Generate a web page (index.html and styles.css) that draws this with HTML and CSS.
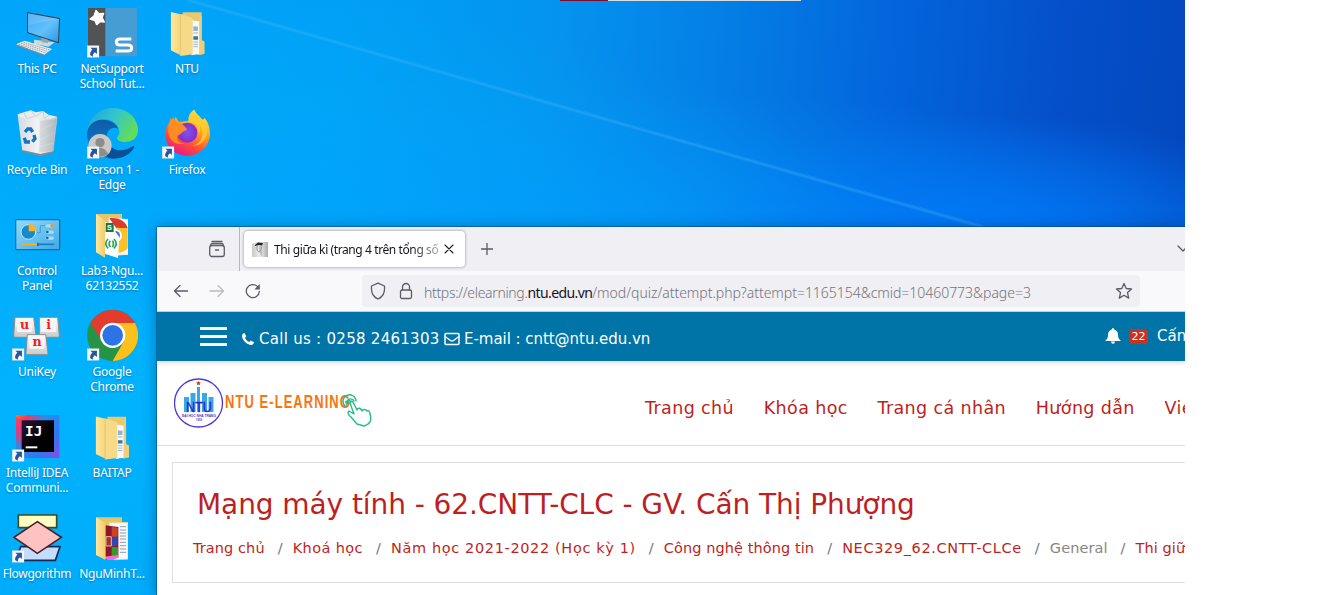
FILE: index.html
```
<!DOCTYPE html>
<html lang="vi">
<head>
<meta charset="utf-8">
<title>Desktop</title>
<link rel="stylesheet" href="styles.css">
</head>
<body>
<svg class="defs" aria-hidden="true">
  <defs>
    <linearGradient id="screen" x1="0" y1="0" x2="1" y2="1"><stop offset="0" stop-color="#3fa9f5"/><stop offset=".55" stop-color="#62c1fb"/><stop offset="1" stop-color="#2b97e8"/></linearGradient>
    <linearGradient id="fold" x1="0" y1="0" x2="1" y2="0"><stop offset="0" stop-color="#ffe7a2"/><stop offset="1" stop-color="#f0cb68"/></linearGradient>
    <linearGradient id="edgeTop" x1="0" y1="0" x2="1" y2=".5"><stop offset="0" stop-color="#1c9fdc"/><stop offset=".5" stop-color="#2fc5cf"/><stop offset="1" stop-color="#62dc5c"/></linearGradient>
    <linearGradient id="edgeBody" x1="0" y1="0" x2="0" y2="1"><stop offset="0" stop-color="#0c5ba8"/><stop offset="1" stop-color="#1583d3"/></linearGradient>
    <linearGradient id="fox" x1=".8" y1="0" x2=".3" y2="1"><stop offset="0" stop-color="#fff04a"/><stop offset=".4" stop-color="#ffa51e"/><stop offset=".72" stop-color="#ff4a3c"/><stop offset="1" stop-color="#e8148a"/></linearGradient>
    <radialGradient id="globe"><stop offset="0" stop-color="#7a55f0"/><stop offset="1" stop-color="#8a2bc8"/></radialGradient>
    <linearGradient id="key" x1="0" y1="0" x2="0" y2="1"><stop offset="0" stop-color="#fff"/><stop offset="1" stop-color="#c9c9c9"/></linearGradient>
    <linearGradient id="ij" x1="0" y1="0" x2="1" y2=".9"><stop offset="0" stop-color="#ff7a2c"/><stop offset=".16" stop-color="#f7355e"/><stop offset=".4" stop-color="#268df0"/><stop offset=".75" stop-color="#3574ee"/><stop offset="1" stop-color="#7a54e8"/></linearGradient>
    <linearGradient id="ijIn" x1="0" y1="0" x2="1" y2="1"><stop offset="0" stop-color="#2b1336"/><stop offset=".6" stop-color="#000"/></linearGradient>
    <linearGradient id="panel" x1="0" y1="0" x2="1" y2="1"><stop offset="0" stop-color="#8fdcff"/><stop offset="1" stop-color="#3fa9e6"/></linearGradient>
    <linearGradient id="bin" x1="0" y1="0" x2="1" y2="0"><stop offset="0" stop-color="#d5dbe0"/><stop offset=".5" stop-color="#f1f3f4"/><stop offset="1" stop-color="#b3bcc2"/></linearGradient>
    <symbol id="shortcut" viewBox="0 0 36 36">
      <rect x=".5" y=".5" width="35" height="35" fill="#f4f6f8" stroke="#c8d0d8"/>
      <path d="M10 7h19v18l-6-5c-5 4-6 7-6 13l-8-5c0-8 3-12 7-15z" fill="#27569f"/>
    </symbol>
    <symbol id="folder" viewBox="0 0 102 134">
      <path d="M36 3h57v84l8 4v36l-18 4-47-30z" fill="#e8c870"/>
      <path d="M62 27l24 3v98l-24 4z" fill="#f7f8fa"/>
      <path d="M68 45l14 1v12l-14 1z" fill="#8ab3d8"/><path d="M68 75h14v10H68z" fill="#39799e"/>
      <path d="M68 65h14M68 92h14M68 99h14M68 106h14" stroke="#a3b3c2" stroke-width="3"/>
      <path d="M86 14h7v73l9 4v36l-16 4z" fill="#edcf7b"/>
      <path d="M0 2l45 10v120l-18-2L0 117z" fill="url(#fold)"/>
      <path d="M29 8l37 12v109l-37 5z" fill="#f6da88"/><path d="M29 8v126" stroke="#dfbf66" stroke-width="2"/>
    </symbol>
  </defs>
</svg>

<main class="desktop">
  <svg class="ray" viewBox="0 0 1185 227" aria-hidden="true">
    <path d="M188 0L983 227" stroke="#41b5ff" stroke-opacity=".22" stroke-width="4"/>
    <path d="M188 0L983 227" stroke="#6cc4ff" stroke-opacity=".18"/>
  </svg>
  <div class="strip"><span class="strip-mark"></span></div>

  <div class="icons">
    <div class="icon">
      <svg viewBox="0 12 225 171">
        <path d="M102 119l62 8-18 13-44-8z" fill="#d4d8da"/><path d="M124 112l22 3-2 14-18-2z" fill="#9aa5ad"/>
        <path d="M81 36l99 18-3 76-96-31z" fill="#33424f"/><path d="M84 40l93 17-3 69-90-29z" fill="url(#screen)"/>
        <path d="M84 76l93-19V57L84 40z" fill="#fff" opacity=".12"/>
        <path d="M48 133l26-11 82 25-23 17z" fill="#eceeee"/><path d="M48 133l85 31v3l-85-30z" fill="#7f8a92"/>
        <path d="M56 133l82 26M63 130l82 25M70 127l80 23" stroke="#8d979e" stroke-width="2.5" stroke-dasharray="5 2"/>
      </svg>
      <span class="label">This PC</span>
    </div>
    <div class="icon">
      <svg viewBox="225 12 225 171">
        <path d="M264 24h147v145H264z" fill="#459dd3"/><path d="M264 24h52v144h-52z" fill="#525355"/>
        <path d="M288 31l9 10 14-1-5 13 7 13-13-1-10 9-5-12-15-5 12-9z" fill="#fff" stroke="#fff" stroke-width="4" stroke-linejoin="round"/>
        <path d="M394 117h-34q-11 0-11 9t11 9h24q11 0 11 9t-11 9h-37" fill="none" stroke="#fff" stroke-width="9"/>
        <use href="#shortcut" x="261" y="136" width="37" height="37"/>
      </svg>
      <span class="label">NetSupport<br>School Tut...</span>
    </div>
    <div class="icon">
      <svg viewBox="450 12 225 171"><use href="#folder" x="512" y="34" width="102" height="134"/></svg>
      <span class="label">NTU</span>
    </div>

    <div class="icon">
      <svg viewBox="0 15 225 171">
        <path d="M53 43l18-6 22-6 14 6 22-4 17 11 26 6-16 18H62z" fill="#e9edef"/>
        <path d="M93 31l14 18 22-14 4 20 16-10M71 37l10 19 22-7" fill="none" stroke="#b7c0c6" stroke-width="2"/>
        <path d="M53 46l20 10h78l21-5-13 106-39 10-53-14z" fill="url(#bin)"/>
        <path d="M120 62l-3 96 43-4 11-98zM120 90l40-18M118 120l42-20M120 140l38-10" fill="#9ba6ad" fill-opacity=".25" stroke="#fff" stroke-opacity=".6"/>
        <path d="M67 150l54 12 38-8v5l-39 9-53-13z" fill="#7b8b95"/>
        <path d="M75 96l8-9h9l6 9M102 105l3 11-8 9M90 126H77l-4-13" fill="none" stroke="#1573c0" stroke-width="10"/>
      </svg>
      <span class="label">Recycle Bin</span>
    </div>
    <div class="icon">
      <svg viewBox="225 15 225 171">
        <path d="M261 101c3-47 36-77 76-77 46 0 77 31 77 66 0 27-22 36-39 36-17 0-27-7-23-15 4-6 7-9 6-17-4-27-27-38-48-36-25 2-43 21-49 43z" fill="url(#edgeTop)"/>
        <path d="M261 101c2-25 20-41 44-42 27-1 44 13 50 27-19-8-35 4-35 24 0 33 29 50 60 38 12-4 21-11 23-10 0 13-28 38-64 38-45 0-78-33-78-75z" fill="url(#edgeBody)"/>
        <path d="M320 110c2 33 31 48 60 38 12-4 21-12 23-10-5 20-35 42-73 37-30-12-22-50-10-65z" fill="#0a4f97"/>
        <circle cx="300" cy="137" r="35" fill="#cbc9c7"/><circle cx="300" cy="128" r="14" fill="#8f8d8b"/><path d="M279 163q4-20 21-20t24 20q-22 14-45 0z" fill="#8f8d8b"/>
        <use href="#shortcut" x="261" y="139" width="37" height="37"/>
      </svg>
      <span class="label">Person 1 -<br>Edge</span>
    </div>
    <div class="icon">
      <svg viewBox="450 15 225 171">
        <path d="M583 29c5 14 18 19 25 31l6-6c12 15 16 31 16 46 0 38-30 67-67 67-38 0-67-28-67-66 0-15 6-27 14-35l2-12 8 14 7-18 10 16 29-4c-2-15 5-26 17-33z" fill="url(#fox)"/>
        <circle cx="562" cy="98" r="30" fill="url(#globe)"/>
        <path d="M508 66l12-14 11 17c16 2 23 8 30 20l-15 8c-2 7-12 6-15 14-2 11 10 21 26 19-33 10-55-14-52-43z" fill="#ff8c22"/>
        <path d="M574 67c13 3 23 17 22 36 8-15 3-27-2-34 23 19 16 65-18 68 36 3 58-33 36-76-16-9-28-19-31-31-11 9-17 22-15 36z" fill="#ffcf32" opacity=".75"/>
        <use href="#shortcut" x="486" y="139" width="37" height="37"/>
      </svg>
      <span class="label">Firefox</span>
    </div>

    <div class="icon">
      <svg viewBox="0 18 225 171">
        <rect x="47" y="59" width="132" height="90" rx="3" fill="url(#panel)" stroke="#276d9c" stroke-width="4"/>
        <circle cx="85" cy="96" r="22" fill="#1689cf" stroke="#c6edff" stroke-width="3"/>
        <path d="M86 94V71a23 23 0 0 1 24 23z" fill="#ffb01d"/>
        <path d="M111 98h10V77h14M142 77h18M142 96h18M142 114h18" fill="none" stroke="#3c83b8" stroke-width="2"/>
        <g fill="#a7ddfa" stroke="#5caadb"><rect x="136" y="72" width="26" height="11" rx="5"/><rect x="136" y="91" width="26" height="11" rx="5"/><rect x="136" y="109" width="26" height="11" rx="5"/></g>
        <circle cx="156" cy="77" r="5" fill="#ff8b1a"/><circle cx="142" cy="96" r="4" fill="#17659b"/><circle cx="142" cy="114" r="4" fill="#17659b"/>
        <path d="M65 133h46" stroke="#ffae17" stroke-width="5"/><path d="M111 133h52" stroke="#197ac5" stroke-width="5"/><path d="M114 128v10" stroke="#106bb0" stroke-width="5"/>
      </svg>
      <span class="label">Control<br>Panel</span>
    </div>
    <div class="icon">
      <svg viewBox="225 18 225 171">
        <path d="M288 42h78v15h18v107l-40 4z" fill="#e6c569"/>
        <path d="M326 52l58 6v106h-58z" fill="#f4f6f8"/>
        <path d="M328 55c30-4 50 11 55 30l-35-2z" fill="#dc3a2c"/><path d="M349 84h34v60c-8 10-18 14-28 14z" fill="#fcc129"/><circle cx="346" cy="107" r="20" fill="#fff"/><circle cx="346" cy="107" r="14" fill="#3b79df"/>
        <path d="M313 66l28 6 6 25 11 14-4 63-41-13z" fill="#fcfcfc"/>
        <path d="M317 69h24v27h-24z" fill="#197647"/>
        <text x="321" y="90" class="tiny-s">S</text>
        <path d="M324 117q-13 14 0 28M342 117q13 14 0 28M331 122q-7 9 0 19M337 122q7 9 0 19" fill="none" stroke="#22a65a" stroke-width="5"/>
        <path d="M288 42l27 18v113l-27-16z" fill="url(#fold)"/>
      </svg>
      <span class="label">Lab3-Ngu...<br>62132552</span>
    </div>
    <div class="icon"></div>

    <div class="icon">
      <svg viewBox="0 21 225 171">
        <rect x="37" y="31" width="151" height="150" fill="none" stroke="#2aa4e6" stroke-width="2"/>
        <g stroke="#8b8b8b" stroke-width="3" fill="url(#key)"><path d="M45 52h56l7 56q0 4-4 4H45q-4 0-4-4z"/><path d="M118 52h55l5 56q0 4-4 4h-56z"/><path d="M82 104h55l7 56q0 4-4 4H82q-4 0-4-4z"/></g>
        <g fill="#f6f6f6"><rect x="51" y="56" width="46" height="40" rx="4"/><rect x="123" y="56" width="46" height="40" rx="4"/><rect x="88" y="108" width="46" height="38" rx="4"/></g>
        <g class="keycap"><text x="74" y="87">u</text><text x="146" y="87">i</text><text x="111" y="138">n</text></g>
        <use href="#shortcut" x="36" y="145" width="37" height="37"/>
      </svg>
      <span class="label">UniKey</span>
    </div>
    <div class="icon">
      <svg viewBox="225 21 225 171">
        <circle cx="338" cy="106" r="77" fill="#269447"/>
        <path d="M338 106L271 69a77 77 0 0 1 134 0z" fill="#e33b2e"/>
        <path d="M338 69h67a77 77 0 0 1-67 114l33-58z" fill="#fcc11c"/>
        <path d="M271 69l37 58 30-21V69z" fill="#e33b2e"/>
        <circle cx="338" cy="106" r="38" fill="#fff"/><circle cx="338" cy="106" r="31" fill="#2c73e8"/>
        <use href="#shortcut" x="261" y="145" width="37" height="37"/>
      </svg>
      <span class="label">Google<br>Chrome</span>
    </div>
    <div class="icon"></div>

    <div class="icon">
      <svg viewBox="0 24 225 171">
        <path d="M48 45h130v129H48z" fill="url(#ij)"/><path d="M48 52l18 8v80l-18-30z" fill="#e23b86" opacity=".6"/>
        <path d="M65 61h97v95H65z" fill="url(#ijIn)"/>
        <text x="75" y="108" class="ij-text">IJ</text><path d="M77 142h35" stroke="#fff" stroke-width="6"/>
        <use href="#shortcut" x="36" y="148" width="37" height="37"/>
      </svg>
      <span class="label">IntelliJ IDEA<br>Communi...</span>
    </div>
    <div class="icon">
      <svg viewBox="225 24 225 171"><use href="#folder" x="287" y="46" width="100" height="134"/></svg>
      <span class="label">BAITAP</span>
    </div>
    <div class="icon"></div>

    <div class="icon">
      <svg viewBox="0 27 225 171">
        <path d="M55 45h115v38H55z" fill="#ffffc2" stroke="#3d4a22" stroke-width="5"/>
        <path d="M62 140h118l-14 41H48z" fill="#c4dcff" stroke="#142a55" stroke-width="5"/>
        <path d="M112 65l72 47-72 48-70-48z" fill="#ffc2c2" stroke="#452222" stroke-width="5"/>
        <use href="#shortcut" x="36" y="151" width="37" height="37"/>
      </svg>
      <span class="label">Flowgorithm</span>
    </div>
    <div class="icon">
      <svg viewBox="225 27 225 171">
        <path d="M288 52h78v14h18v112l-40 3z" fill="#e6c569"/>
        <path d="M328 68h55v110h-55z" fill="#f6f8fa"/><path d="M360 80h18M360 90h18M360 99h18M360 108h18M360 117h18M360 127h18M360 137h18M360 147h18M360 157h18" stroke="#939ba5" stroke-width="3"/>
        <path d="M315 76l40 5v92l-40 7z" fill="#8c1728"/>
        <path d="M335 80l18 3v27h-18z" fill="#c8442b"/><path d="M335 112h18v25l-18 2z" fill="#3346b8"/><path d="M335 140l19 2v25l-19 3z" fill="#37982d"/><path d="M318 110h16v28h-16z" fill="#a3332f" stroke="#eeb7a4" stroke-width="3"/>
        <path d="M308 171l46-6v9l-30 7z" fill="#f36bd9"/>
        <path d="M288 52l29 18v110l-29-15z" fill="url(#fold)"/>
      </svg>
      <span class="label">NguMinhT...</span>
    </div>
  </div>

  <section class="window">
    <div class="tabbar">
      <svg class="archive" viewBox="0 0 18 18"><path d="M4 1.500h10" /><path d="M2.700 5.500q0-2 2-2h8.600q2 0 2 2" /><rect x="1.700" y="5.500" width="14.600" height="11" rx="2.200"/><path d="M7.500 10h3"/></svg>
      <span class="divider"></span>
      <div class="tab">
        <svg class="favicon" viewBox="0 0 16 16"><defs><linearGradient id="fav"><stop offset="0" stop-color="#c9c9c9"/><stop offset=".5" stop-color="#eee"/><stop offset="1" stop-color="#aaa"/></linearGradient></defs><path d="M0 3l5-2h11v15H0z" fill="url(#fav)"/><path d="M3 4l3-2.500 5 .5-1 2.500-3-.5-4 1z" fill="#222"/><path d="M5 5v4q1 2 3 2V5M10 5l-1 4v5" fill="none" stroke="#888" stroke-width=".8"/></svg>
        <span class="tab-title">Thi giữa kì (trang 4 trên tổng số</span>
        <svg class="close" viewBox="0 0 10 10"><path d="M1 1l8 8M9 1l-8 8"/></svg>
      </div>
      <svg class="plus" viewBox="0 0 12 12"><path d="M6 0v12M0 6h12"/></svg>
      <svg class="chevron" viewBox="0 0 12 8"><path d="M1 1l5 5 5-5"/></svg>
    </div>

    <div class="toolbar">
      <svg class="tool" viewBox="0 0 16 16"><path d="M14.500 8H1.500M7 2.500L1.500 8 7 13.500"/></svg>
      <svg class="tool disabled" viewBox="0 0 16 16"><path d="M1 8h13.500M9 2.500L14.500 8 9 13.500"/></svg>
      <svg class="tool" viewBox="0 0 16 16"><path d="M14.300 8.500A6.500 6.500 0 1 1 12.500 3.600"/><path d="M14.800 1v5.500H9.300z" class="solid"/></svg>
      <div class="urlbar">
        <svg class="shield" viewBox="0 0 16 18"><path d="M8 1.200L14.500 4Q15 11 12 14q-1.500 2-4 3-2.500-1-4-3Q1 11 1.500 4z"/></svg>
        <svg class="lock" viewBox="0 0 14 18"><rect x="1.500" y="8" width="11" height="8.500" rx="1.500"/><path d="M3.500 8V5a3.500 3.500 0 0 1 7 0v3"/></svg>
        <span class="url"><span>https://elearning.</span><b>ntu.edu.vn</b>/mod/quiz/attempt.php?attempt=1165154&amp;cmid=10460773&amp;page=3</span>
        <svg class="star" viewBox="0 0 18 18"><path d="M9 1.500l2.200 5 5.300.5-4 3.600 1.200 5.500L9 13.300l-4.700 2.800 1.200-5.500-4-3.600 5.300-.5z"/></svg>
      </div>
    </div>

    <div class="topbar">
      <div class="burger"><i></i><i></i><i></i></div>
      <svg class="phone" viewBox="0 0 12 12"><path d="M12 9.300c0 1.500-1.300 2.600-2.700 2.600C5 11.900 0 7 0 2.700 0 1.300 1 .2 2.500 0L4.300 3.200 3 4.700c.8 1.900 2.200 3.300 4.200 4.300l1.500-1.500z"/></svg>
      <span class="call">Call us : 0258 2461303</span>
      <svg class="mail" viewBox="0 0 16 14"><rect x="1" y="1.500" width="14" height="11" rx="1"/><path d="M1 4.500l5.500 4q1.500 1 3 0l5.500-4"/></svg>
      <span class="email">E-mail : cntt@ntu.edu.vn</span>
      <svg class="bell" viewBox="0 0 16 16"><path d="M8 0q1.200 0 1.200 1.500Q13 2.500 13 7c0 3 1 4.500 3 6H0c2-1.500 3-3 3-6 0-4.500 3.800-5.500 3.800-5.500Q6.800 0 8 0zM6 13.500h4q0 2.300-2 2.300t-2-2.300z"/></svg>
      <span class="badge">22</span>
      <span class="user">Cấn</span>
    </div>

    <header class="site-header">
      <svg class="logo" viewBox="0 0 200 54">
        <circle cx="24.500" cy="27" r="24" fill="#fff" stroke="#5136d6" stroke-width="1.300"/>
        <path d="M24.500 5l.8 1.300 1.600.2-1.200 1.100.3 1.700-1.500-.8-1.500.8.3-1.700-1.200-1.100 1.600-.2z" fill="#e02a2a"/>
        <path d="M10 21h5v15h-5zM16.500 17h5v19h-5zM23 11h3v25h-3zM28 17h5v19h-5zM34.500 21h5v15h-5z" fill="#39aae1"/>
        <text class="logo-ntu" x="12" y="36" textLength="26" lengthAdjust="spacingAndGlyphs">NTU</text>
        <text class="logo-small" x="8" y="40.500" textLength="34" lengthAdjust="spacingAndGlyphs">ĐẠI HỌC NHA TRANG</text>
        <text class="logo-small" x="22" y="45" textLength="6" lengthAdjust="spacingAndGlyphs">1959</text>
        <text class="logo-name" transform="translate(51 32) scale(.72 1)">NTU E-LEARNING</text>
        <g fill="none" stroke="#23bd88" stroke-width="1.400" stroke-linecap="round" stroke-linejoin="round">
          <path d="M183 48l-6-7c-3-2-4-5-2-6l5 3-4-11q1-3 3-1l4 8c1-3 4-2 5 1 1-2 4-2 5 0 2-1 3 1 3 3 2 7 0 10-6 12z" fill="#fff"/>
          <path d="M173 29a4 4 0 1 1 7-4M171 30a6.500 6.500 0 1 1 11-5"/><circle cx="175" cy="26" r="1.500"/>
        </g>
      </svg>
      <nav class="nav"><a>Trang chủ</a><a>Khóa học</a><a>Trang cá nhân</a><a>Hướng dẫn</a><a>Vie</a></nav>
    </header>

    <section class="course">
      <h1>Mạng máy tính - 62.CNTT-CLC - GV. Cấn Thị Phượng</h1>
      <div class="crumbs"><a>Trang chủ</a><i>/</i><a class="short">Khoá học</a><i>/</i><a class="digits">Năm học 2021-2022 (Học kỳ 1)</a><i>/</i><a>Công nghệ thông tin</a><i>/</i><a class="digits">NEC329_62.CNTT-CLCe</a><i>/</i><span>General</span><i>/</i><a>Thi giữ</a></div>
    </section>
  </section>
</main>
</body>
</html>
```
FILE: styles.css
```
* { box-sizing: border-box; }
body { margin: 0; background: #fff; overflow: hidden; font-family: "DejaVu Sans", sans-serif; }
svg { display: block; flex: none; }
.defs { position: absolute; width: 0; height: 0; }

.desktop {
  position: relative;
  width: 1185px;
  height: 595px;
  overflow: hidden;
  background:
    radial-gradient(ellipse 320px 120px at 1000px 235px, rgba(0, 125, 255, .8), rgba(0, 125, 255, 0)),
    radial-gradient(ellipse 700px 150px at 600px 240px, rgba(0, 155, 255, .6), rgba(0, 155, 255, 0)),
    radial-gradient(ellipse 900px 420px at 100px 400px, rgba(0, 184, 255, .8), rgba(0, 180, 255, 0)),
    linear-gradient(95deg, #00a5fa 0%, #00a0f6 28%, #0494ef 45%, #0480e6 58%, #0366dc 72%, #0450ca 86%, #0345ba 100%);
}
.ray { position: absolute; left: 0; top: 0; width: 1185px; height: 227px; }
.strip { position: absolute; left: 560px; top: 0; width: 241px; height: 1px; background: #d8dde0; }
.strip-mark { display: block; width: 48px; height: 1px; background: #7d0b2b; }

.icons {
  display: grid;
  grid-template-columns: repeat(3, 75px);
  grid-auto-rows: 101px;
  width: 225px;
  padding-top: 4px;
}
.icon svg { width: 75px; height: 57px; }
.label {
  display: block;
  width: 74px;
  text-align: center;
  font: 12px/15px "Noto Sans", "Open Sans", sans-serif;
  letter-spacing: -.25px;
  white-space: nowrap;
  color: #fff;
  text-shadow: 0 1px 2px rgba(0, 50, 90, .45);
}
.keycap text { font: bold 38px "DejaVu Serif", serif; fill: #f2201d; text-anchor: middle; }
.ij-text { font: bold 43px "DejaVu Sans Mono", monospace; fill: #fff; }
.tiny-s { font: bold 22px "Liberation Sans", sans-serif; fill: #fff; }

.window {
  position: absolute;
  left: 157px;
  top: 227px;
  width: 1028px;
  height: 368px;
  background: #fff;
  box-shadow: 0 0 0 1px rgba(0, 60, 110, .45), 0 2px 14px rgba(0, 20, 60, .4);
}
.tabbar { display: flex; align-items: center; height: 44px; background: #f0eff4; overflow: hidden; }
.tabbar svg, .toolbar svg { fill: none; stroke: #5b5b66; stroke-width: 1.300; stroke-linecap: round; stroke-linejoin: round; }
.archive { width: 18px; height: 18px; margin-left: 51px; }
.divider { width: 1px; height: 44px; margin: 0 4px 0 13px; background: #b5b5ba; }
.tab {
  display: flex;
  align-items: center;
  width: 221px;
  height: 36px;
  padding-left: 8px;
  border-radius: 4px;
  background: #fff;
  box-shadow: 0 0 3px rgba(0, 0, 0, .45);
}
.tabbar .favicon { width: 16px; height: 16px; stroke: none; }
.tab-title {
  width: 167px;
  margin: 2px 0 0 6px;
  overflow: hidden;
  white-space: nowrap;
  font: 12px/20px "Noto Sans", "Open Sans", sans-serif;
  letter-spacing: -.4px;
  color: #15141a;
  mask-image: linear-gradient(90deg, #000 138px, rgba(0, 0, 0, .3) 166px);
}
.tabbar .close { width: 10px; height: 10px; margin-left: 3px; stroke: #222; stroke-width: 1.100; }
.plus { width: 12px; height: 12px; margin-left: 16px; }
.chevron { width: 12px; height: 8px; margin-left: auto; margin-right: -4px; }

.toolbar { display: flex; align-items: center; height: 41px; padding-left: 16px; background: #f9f9fb; border-bottom: 1px solid #ccccd0; }
.tool { width: 16px; height: 16px; margin-right: 20px; }
.toolbar .disabled { stroke: #bbbbc0; }
.toolbar .solid { fill: #5b5b66; stroke: none; }
.urlbar { display: flex; align-items: center; width: 778px; height: 32px; margin-left: 81px; padding-left: 8px; border-radius: 4px; background: #f0eff4; }
.shield { width: 16px; height: 18px; }
.lock { width: 14px; height: 18px; margin-left: 13px; }
.url { width: 691px; margin-left: 11px; padding-top: 3px; font: 300 14px/20px "Noto Sans", "Open Sans", sans-serif; letter-spacing: -.03px; white-space: nowrap; color: #73737a; }
.url span { letter-spacing: -.33px; }
.url b { font-weight: 400; letter-spacing: -.6px; color: #15141a; }
.star { width: 18px; height: 18px; }

.topbar { position: relative; z-index: 1; display: flex; align-items: center; height: 49px; padding-left: 43px; background: #0073a7; color: #fff; font-size: 15px; line-height: 20px; white-space: nowrap; box-shadow: 0 1px 5px rgba(0, 0, 0, .2); clip-path: inset(0 0 -8px 0); }
.topbar > * { flex: none; }
.burger { display: flex; flex-direction: column; gap: 5px; width: 27px; }
.burger i { height: 3px; background: #fff; }
.phone { width: 12px; height: 12px; margin: 4px 0 0 15px; fill: #fff; }
.call { width: 180px; margin: 4px 0 0 5px; letter-spacing: .28px; }
.mail { width: 16px; height: 14px; margin: 4px 0 0 5px; fill: none; stroke: #fff; stroke-width: 1.500; }
.email { width: 186px; margin: 4px 0 0 4px; letter-spacing: -.04px; }
.bell { width: 16px; height: 16px; margin: -2px 0 0 455px; fill: #fff; }
.badge { width: 19px; height: 15px; margin: 0 9px 0 8px; border-radius: 2px; background: #ca3120; font-size: 11px; line-height: 15px; text-align: center; }
.user { margin-top: -1px; }

.site-header { display: flex; height: 85px; padding-left: 17px; border-bottom: 1px solid #e0e0e0; }
.logo { width: 200px; height: 54px; margin-top: 15px; }
.logo-ntu { font: 15px "Liberation Sans", sans-serif; fill: #3023d4; stroke: #3023d4; stroke-width: .4px; }
.logo-small { font: bold 4px "Liberation Sans", sans-serif; fill: #4a36d5; }
.logo-name { font: bold 18px "Liberation Sans", sans-serif; letter-spacing: 1.500px; fill: #fa750f; }
.nav { display: flex; gap: 29.700px; margin: 34px 0 0 271px; font-size: 17.500px; line-height: 26px; letter-spacing: .38px; white-space: nowrap; color: #bd1f23; }

.course { width: 1040px; height: 121px; margin: 16px 0 0 15px; padding: 24px 0 0 20px; border: 1px solid #dedede; color: #bd1f23; white-space: nowrap; clip-path: inset(0 27px 0 0); }
.course h1 { margin: 0 0 0 4px; font-size: 28px; line-height: 36px; font-weight: 400; letter-spacing: -.08px; }
.crumbs { display: flex; margin-top: 15px; font-size: 14.500px; line-height: 20px; letter-spacing: .08px; }
.crumbs .short { letter-spacing: .4px; }
.crumbs .digits { letter-spacing: .63px; }
.crumbs i { width: 28px; padding-left: 13px; font-style: normal; color: #72777c; }
.crumbs span { color: #868686; }
```
